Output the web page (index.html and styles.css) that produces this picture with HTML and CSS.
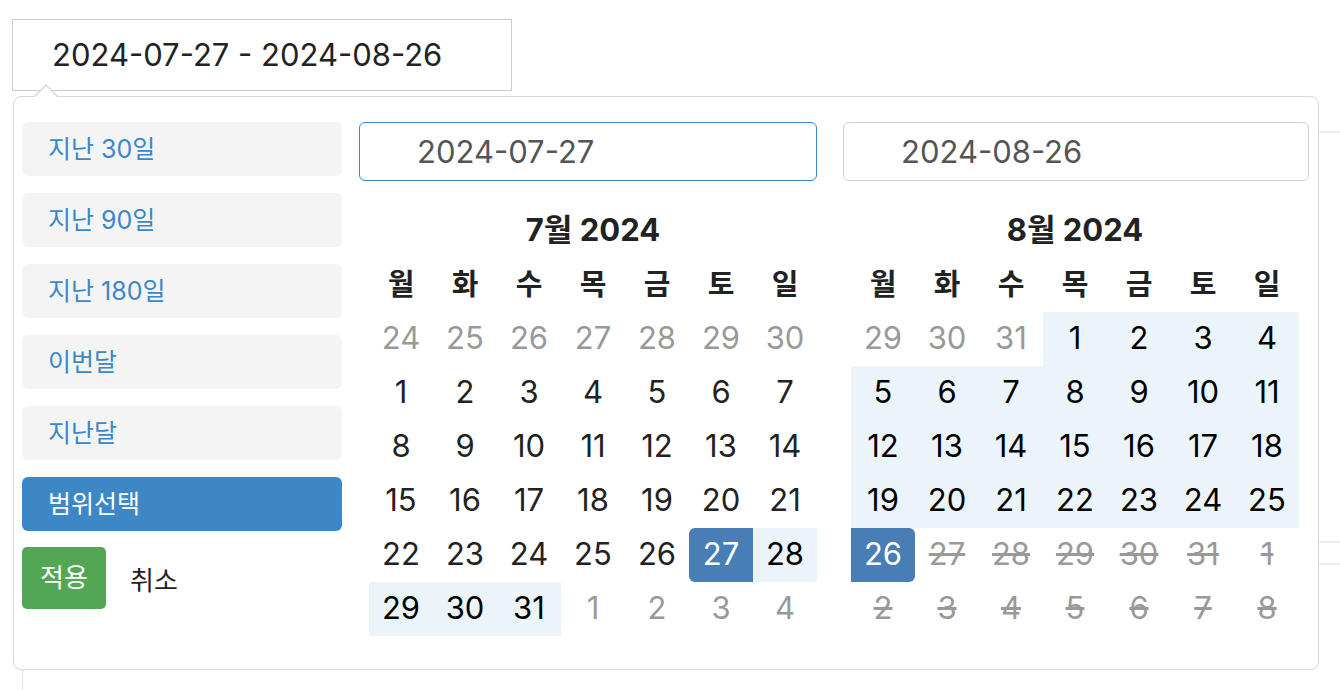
FILE: index.html
```html
<!DOCTYPE html>
<html lang="ko">
<head>
<meta charset="utf-8">
<title>Date range picker</title>
<link rel="stylesheet" href="styles.css">
</head>
<body>
<div class="page">
  <div class="range-input">2024-07-27 - 2024-08-26</div>
  <div class="bg-table">
    <div class="bg-row r1"></div>
    <div class="bg-row r2"></div>
    <div class="bg-row r3"></div>
  </div>

  <div class="picker">
    <div class="ranges">
      <div class="range-item">지난 30일</div>
      <div class="range-item">지난 90일</div>
      <div class="range-item">지난 180일</div>
      <div class="range-item">이번달</div>
      <div class="range-item">지난달</div>
      <div class="range-item active">범위선택</div>
      <div class="buttons">
        <div class="btn-apply">적용</div>
        <div class="btn-cancel">취소</div>
      </div>
    </div>

    <div class="cal cal-left">
      <div class="date-input focus">2024-07-27</div>
      <div class="table">
        <div class="month">7월 2024</div>
        <div class="grid">
          <div class="wd">월</div><div class="wd">화</div><div class="wd">수</div><div class="wd">목</div><div class="wd">금</div><div class="wd">토</div><div class="wd">일</div>
          <div class="d off">24</div><div class="d off">25</div><div class="d off">26</div><div class="d off">27</div><div class="d off">28</div><div class="d off">29</div><div class="d off">30</div>
          <div class="d">1</div><div class="d">2</div><div class="d">3</div><div class="d">4</div><div class="d">5</div><div class="d">6</div><div class="d">7</div>
          <div class="d">8</div><div class="d">9</div><div class="d">10</div><div class="d">11</div><div class="d">12</div><div class="d">13</div><div class="d">14</div>
          <div class="d">15</div><div class="d">16</div><div class="d">17</div><div class="d">18</div><div class="d">19</div><div class="d">20</div><div class="d">21</div>
          <div class="d">22</div><div class="d">23</div><div class="d">24</div><div class="d">25</div><div class="d">26</div><div class="d active start">27</div><div class="d in">28</div>
          <div class="d in">29</div><div class="d in">30</div><div class="d in">31</div><div class="d off">1</div><div class="d off">2</div><div class="d off">3</div><div class="d off">4</div>
        </div>
      </div>
    </div>

    <div class="cal cal-right">
      <div class="date-input">2024-08-26</div>
      <div class="table">
        <div class="month">8월 2024</div>
        <div class="grid">
          <div class="wd">월</div><div class="wd">화</div><div class="wd">수</div><div class="wd">목</div><div class="wd">금</div><div class="wd">토</div><div class="wd">일</div>
          <div class="d off">29</div><div class="d off">30</div><div class="d off">31</div><div class="d in">1</div><div class="d in">2</div><div class="d in">3</div><div class="d in">4</div>
          <div class="d in">5</div><div class="d in">6</div><div class="d in">7</div><div class="d in">8</div><div class="d in">9</div><div class="d in">10</div><div class="d in">11</div>
          <div class="d in">12</div><div class="d in">13</div><div class="d in">14</div><div class="d in">15</div><div class="d in">16</div><div class="d in">17</div><div class="d in">18</div>
          <div class="d in">19</div><div class="d in">20</div><div class="d in">21</div><div class="d in">22</div><div class="d in">23</div><div class="d in">24</div><div class="d in">25</div>
          <div class="d active end">26</div><div class="d disabled">27</div><div class="d disabled">28</div><div class="d disabled">29</div><div class="d disabled">30</div><div class="d disabled">31</div><div class="d disabled">1</div>
          <div class="d disabled">2</div><div class="d disabled">3</div><div class="d disabled">4</div><div class="d disabled">5</div><div class="d disabled">6</div><div class="d disabled">7</div><div class="d disabled">8</div>
        </div>
      </div>
    </div>
  </div>
</div>
</body>
</html>
```

FILE: styles.css
```css
* { box-sizing: border-box; }

body {
  margin: 0;
  background: #fff;
  color: #222;
  font-family: "Inter", "Noto Sans CJK KR", sans-serif;
}

.page {
  position: relative;
  padding: 19px 0 0 12px;
  height: 690px;
  overflow: hidden;
}

.range-input {
  width: 500px;
  height: 72px;
  border: 1px solid #ccc;
  padding-left: 39px;
  line-height: 70px;
  font-size: 31px;
  color: #222;
}

.bg-table {
  margin: 40px 0 0 10px;
  border-left: 1px solid #e6e6ec;
}

.bg-row { border-top: 2px solid #ececf0; }
.r1 { height: 410px; }
.r2 { height: 22px; }
.r3 { height: 200px; }

/* popup */
.picker {
  position: absolute;
  left: 13px;
  top: 96px;
  width: 1306px;
  height: 574px;
  background: #fff;
  border: 1px solid #d8d8d8;
  border-radius: 8px;
  display: flex;
  align-items: flex-start;
  padding: 25px 9px 0 8px;
}

.picker::before {
  content: "";
  position: absolute;
  left: 20px;
  top: -13px;
  border-left: 12px solid transparent;
  border-right: 12px solid transparent;
  border-bottom: 12px solid #d8d8d8;
}

.picker::after {
  content: "";
  position: absolute;
  left: 21px;
  top: -11px;
  border-left: 11px solid transparent;
  border-right: 11px solid transparent;
  border-bottom: 11px solid #fff;
}

.ranges {
  width: 320px;
  display: flex;
  flex-direction: column;
  gap: 17px;
}

.range-item {
  height: 54px;
  line-height: 54px;
  padding-left: 26px;
  border-radius: 6px;
  background: #f4f4f4;
  color: #3a87c9;
  font-size: 25px;
}

.range-item.active {
  background: #3d87c7;
  color: #fff;
}

.buttons {
  display: flex;
  align-items: center;
  gap: 24px;
  margin-top: -1px;
}

.btn-apply {
  width: 84px;
  height: 62px;
  line-height: 62px;
  text-align: center;
  border-radius: 5px;
  background: #53a653;
  color: #fff;
  font-size: 26px;
}

.btn-cancel {
  font-size: 26px;
  color: #222;
}

/* calendars */
.cal { display: flex; flex-direction: column; }
.cal-left { width: 458px; margin-left: 17px; }
.cal-right { width: 466px; margin-left: 26px; }
.cal-left .table { margin-left: 10px; }
.cal-right .table { margin-left: 8px; }

.date-input {
  height: 59px;
  line-height: 57px;
  border: 1px solid #cfcfcf;
  border-radius: 6px;
  padding-left: 57px;
  font-size: 31px;
  color: #555;
}

.date-input.focus { border-color: #3c87c8; }

.table { width: 448px; margin-top: 23px; }

.month {
  height: 54px;
  line-height: 52px;
  text-align: center;
  font-weight: 700;
  font-size: 31px;
  color: #222;
}

.grid {
  display: grid;
  grid-template-columns: repeat(7, 64px);
  grid-auto-rows: 54px;
}

.wd, .d {
  display: flex;
  align-items: center;
  justify-content: center;
  font-size: 31px;
  padding-bottom: 3px;
}

.wd { font-weight: 700; color: #222; font-size: 29px; padding-bottom: 6px; }

.d { color: #222; }
.d.off { color: #999; }
.d.in { background: #ebf4f8; color: #000; }
.d.active { background: #487db6; color: #fff; }
.d.start { border-radius: 6px 0 0 6px; }
.d.end { border-radius: 0 6px 6px 0; }
.d.disabled { color: #999; text-decoration: line-through; }
```
